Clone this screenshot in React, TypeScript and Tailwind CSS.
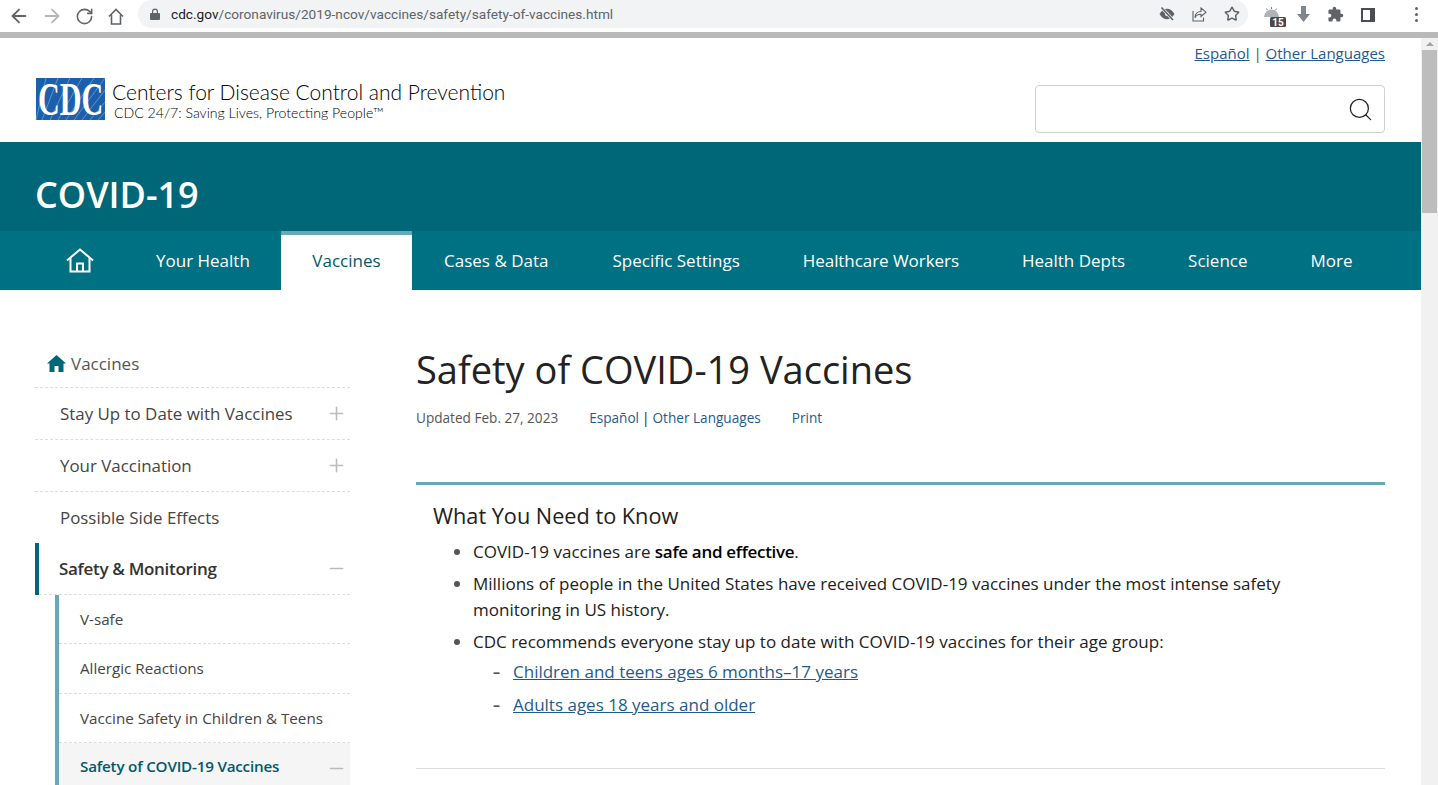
import { ArrowLeft, ArrowRight, RotateCw, Star, Search, Plus, Minus } from "lucide-react";

const navItems = [
  { label: "Cases & Data", cls: "px-[32px]" },
  { label: "Specific Settings", cls: "pl-[32px] pr-[31.5px]" },
  { label: "Healthcare Workers", cls: "px-[31.5px] tracking-[-0.06px]" },
  { label: "Health Depts", cls: "px-[31.5px]" },
  { label: "Science", cls: "px-[31.5px]" },
  { label: "More", cls: "px-[31.5px]" },
];

const subItems = ["V-safe", "Allergic Reactions", "Vaccine Safety in Children & Teens"];

function HomeOutline({ className }: { className?: string }) {
  return (
    <svg className={className} viewBox="0 0 28 25" fill="none" stroke="currentColor" strokeWidth="2">
      <path d="M1 12.5 14 1.5l13 11" />
      <path d="M4.5 10v13.5h19V10" />
      <path d="M11 23.5v-8h6v8" />
    </svg>
  );
}

function CdcLogo() {
  return (
    <svg className="w-[69px] h-[42px] shrink-0 overflow-visible" viewBox="0 0 69 42">
      <rect width="69" height="42" fill="#1c60ad" />
      <path
        d="M0 42 10 0M6 42 22 0M14 42 34 0M22 42 46 0M30 42 58 0M38 42 69 0M46 42 69 12M54 42 69 24M62 42 69 34"
        stroke="#8fb4dc"
        strokeWidth="0.6"
      />
      {/* squeezed to the narrow letters of the logo */}
      <text
        transform="translate(2 37) scale(0.64 1)"
        fontFamily="'Liberation Serif', serif"
        fontWeight="700"
        fontSize="47"
        fill="#fff"
      >
        CDC
      </text>
    </svg>
  );
}

function ChromeBar() {
  return (
    <div className="h-[32px] bg-white flex items-center text-[#5f6368]">
      <ArrowLeft className="w-[22px] h-[22px] ml-[8px]" />
      <ArrowRight className="w-[22px] h-[22px] ml-[11px] text-[#b4b6b9]" />
      <RotateCw className="w-[19px] h-[19px] ml-[11.5px]" />
      <svg className="w-[16px] h-[17px] ml-[14.5px]" viewBox="0 0 16 17" fill="none" stroke="#5f6368" strokeWidth="1.6">
        <path d="M1 8.5 8 1.500l7 7" />
        <path d="M3.500 7v9h9V7" />
      </svg>
      <div className="ml-[14px] w-[1110px] h-[28px] self-start bg-[#f1f3f4] rounded-full flex items-center">
        <svg className="w-[10px] h-[12px] ml-[12px]" viewBox="0 0 10 12" fill="#5f6368">
          <path d="M1 5h1V3.500a3 3 0 0 1 6 0V5h1a1 1 0 0 1 1 1v5a1 1 0 0 1-1 1H1a1 1 0 0 1-1-1V6a1 1 0 0 1 1-1zm2.200 0h3.600V3.500a1.800 1.800 0 0 0-3.600 0z" />
        </svg>
        <span className="ml-[11px] text-[13.65px] font-['Roboto',sans-serif] text-[#5f6368]">
          <span className="text-[#202124]">cdc.gov</span>/coronavirus/2019-ncov/vaccines/safety/safety-of-vaccines.html
        </span>
        <div className="ml-auto flex items-center gap-[17px] mr-[8px]">
          <svg className="w-[16px] h-[16px]" viewBox="0 0 16 16">
            <path d="M0.500 8c2-3.500 4.700-5.200 7.500-5.200s5.500 1.700 7.500 5.200c-2 3.500-4.700 5.200-7.500 5.200S2.500 11.500 0.500 8z" fill="#5f6368" />
            <circle cx="8" cy="8" r="2" fill="#f1f3f4" />
            <path d="M2.500 1.500 14 14" stroke="#f1f3f4" strokeWidth="3" />
            <path d="M2.500 1.500 14 14" stroke="#5f6368" strokeWidth="1.600" />
          </svg>
          <svg className="w-[15px] h-[15px]" viewBox="0 0 15 15" fill="none" stroke="#5f6368" strokeWidth="1.100">
            <path d="M1 4v10h10.500v-3.500" />
            <path d="M9 1l5 4.200-5 4.300V7.200c-3 0-5 1-6 3.500 0-4 2.500-6.200 6-6.200z" />
          </svg>
          <Star className="w-[16px] h-[16px]" strokeWidth={2.2} />
        </div>
      </div>
      <svg className="w-[22px] h-[27px] ml-[16px] self-start" viewBox="0 0 22 27">
        <path d="M0 17a7.500 7.500 0 0 1 15 0z" fill="#b0b4b8" />
        <path d="M7.500 7v2M2.500 8.500l1 1.500M12.500 8.500l-1 1.500" stroke="#80868b" strokeWidth="1" />
        <rect x="6" y="17" width="16" height="10" rx="1.500" fill="#4a4a4a" />
        <text x="14" y="25.500" textAnchor="middle" fontFamily="Roboto, sans-serif" fontWeight="700" fontSize="10" fill="#fff">
          15
        </text>
      </svg>
      <svg className="w-[13px] h-[16px] ml-[11px] -mt-[5px]" viewBox="0 0 13 16" fill="#80868b">
        <path d="M4 0h5v8h4l-6.500 8L0 8h4z" />
      </svg>
      <svg className="w-[17px] h-[17px] ml-[17px] -mt-[3px]" viewBox="0 0 24 24" fill="#5f6368">
        <path d="M20.500 11H19V7c0-1.100-.9-2-2-2h-4V3.500a2.500 2.500 0 0 0-5 0V5H4c-1.100 0-2 .9-2 2v3.800h1.500c1.500 0 2.700 1.200 2.700 2.700s-1.200 2.700-2.700 2.700H2V20c0 1.100.9 2 2 2h3.800v-1.500c0-1.500 1.200-2.700 2.700-2.700s2.700 1.200 2.700 2.700V22H17c1.100 0 2-.9 2-2v-4h1.500a2.500 2.500 0 0 0 0-5z" />
      </svg>
      <div className="w-[14px] h-[14px] ml-[17px] -mt-[3px] border-[2px] border-r-[5px] border-[#4a4e52]" />
      <div className="ml-[40px] -mt-[3px] flex flex-col gap-[3px]">
        <span className="w-[3px] h-[3px] rounded-full bg-[#5f6368]" />
        <span className="w-[3px] h-[3px] rounded-full bg-[#5f6368]" />
        <span className="w-[3px] h-[3px] rounded-full bg-[#5f6368]" />
      </div>
    </div>
  );
}

export default function App() {
  return (
    <div className="w-[1438px] h-[785px] overflow-hidden bg-white font-['Open_Sans',sans-serif] text-[#212121]">
      <ChromeBar />
      <div className="h-[6px] bg-[#b9b9b9]" />
      <div className="flex">
        <div className="w-[1421px] h-[747px] overflow-hidden">
          {/* site header */}
          <header className="h-[104px] px-[36px]">
            <div className="text-right pt-[4px] text-[15px] leading-[22px]">
              <a className="underline text-[#1f5a8c]">Español</a> <span className="text-[#1f5a8c]">|</span>{" "}
              <a className="underline text-[#1f5a8c]">Other Languages</a>
            </div>
            <div className="flex justify-between items-start">
              <div className="flex mt-[14px]">
                <CdcLogo />
                <div className="ml-[7px] pt-[1px] text-black font-['Lato',sans-serif] font-light">
                  <div className="text-[21px] leading-[26px] whitespace-nowrap">Centers for Disease Control and Prevention</div>
                  <div className="text-[14.1px] leading-[17px] ml-[2px] -mt-[1px]">CDC 24/7: Saving Lives, Protecting People™</div>
                </div>
              </div>
              <div className="w-[350px] h-[48px] mt-[21px] border border-[#ccd0d0] rounded-[4px] flex items-center justify-end pr-[10px]">
                <Search className="w-[27px] h-[27px] text-[#222]" strokeWidth={1.1} />
              </div>
            </div>
          </header>

          {/* covid band */}
          <div className="h-[89px] bg-[#006778] px-[35px] flex items-center pt-[16px]">
            <h1 className="text-[36px] font-semibold text-white leading-none">COVID-19</h1>
          </div>
          <nav className="h-[59px] bg-[#007083] pl-[35px] flex text-white text-[17px]">
            <a className="px-[31px] flex items-center">
              <HomeOutline className="w-[28px] h-[25px]" />
            </a>
            <a className="pl-[31px] pr-[31px] flex items-center">Your Health</a>
            <a className="px-[31.5px] flex items-center bg-white text-[#00596b] font-medium border-t-[4px] border-[#68a9b8] pb-[4px]">Vaccines</a>
            {navItems.map((item) => (
              <a key={item.label} className={`${item.cls} flex items-center`}>
                {item.label}
              </a>
            ))}
          </nav>

          {/* body */}
          <div className="flex pl-[35px] pt-[47px]">
            <aside className="w-[315px] shrink-0 text-[#444]">
              <div className="h-[51px] pl-[12px] pt-[3px] flex items-center gap-[5px] border-b border-dashed border-[#ddd] text-[17px] text-[#555]">
                <svg className="w-[19px] h-[17px] -mt-[1px]" viewBox="0 0 19 17" fill="#006778">
                  <path d="M9.500 0 19 8.500h-2.500V17H11.500V11H7.500V17H2.500V8.500H0Z" />
                </svg>
                Vaccines
              </div>
              <div className="h-[52px] pl-[25px] pr-[3px] flex items-center justify-between border-b border-dashed border-[#ddd] text-[16.9px]">
                Stay Up to Date with Vaccines
                <Plus className="w-[21px] h-[21px] text-[#bbb]" strokeWidth={1.8} />
              </div>
              <div className="h-[52px] pl-[25px] pr-[3px] flex items-center justify-between border-b border-dashed border-[#ddd] text-[16.9px]">
                Your Vaccination
                <Plus className="w-[21px] h-[21px] text-[#bbb]" strokeWidth={1.8} />
              </div>
              <div className="h-[51px] pl-[25px] flex items-center text-[16.9px]">Possible Side Effects</div>
              <div className="h-[52px] border-l-[4px] border-[#006778]">
                <div className="h-full pl-[20px] pr-[3px] flex items-center justify-between border-b border-dashed border-[#ddd] text-[17px] font-semibold tracking-[-0.3px] text-[#333]">
                  Safety &amp; Monitoring
                  <Minus className="w-[21px] h-[21px] text-[#bbb]" strokeWidth={1.8} />
                </div>
              </div>
              <div className="ml-[20px] border-l-[4px] border-[#68a9b8]">
                {subItems.map((item, i) => (
                  <div
                    key={item}
                    className={`${i === 1 ? "h-[50px]" : "h-[49px]"} pl-[21px] flex items-center border-b border-dashed border-[#ddd] text-[15.2px]`}
                  >
                    {item}
                  </div>
                ))}
                <div className="h-[49px] pl-[21px] pr-[3px] pb-[2px] flex items-center justify-between bg-[#f5f5f5] text-[15.2px] font-semibold tracking-[-0.2px] text-[#00596b]">
                  Safety of COVID-19 Vaccines
                  <Minus className="w-[21px] h-[21px] text-[#bbb] mt-[4px]" strokeWidth={1.8} />
                </div>
              </div>
            </aside>

            <main className="ml-[66px] w-[969px]">
              <h2 className="text-[38px] leading-[48px] text-[#222] mt-[8px]">Safety of COVID-19 Vaccines</h2>
              <div className="flex text-[13.6px] mt-[15px] leading-[20px]">
                <span className="text-[#555]">Updated Feb. 27, 2023</span>
                <span className="ml-[31px] text-[#1f5a8c]">Español</span>
                <span className="mx-[3px]">|</span>
                <span className="text-[#1f5a8c]">Other Languages</span>
                <span className="ml-[31px] text-[#1f5a8c]">Print</span>
              </div>
              <section className="mt-[54px] border-t-[3px] border-[#68a9b8] pl-[17px] pt-[17px] pb-[50px]">
                <h3 className="text-[21.7px] leading-[28px]">What You Need to Know</h3>
                <ul className="list-disc pl-[40px] pr-[80px] mt-[9px] text-[17px] leading-[26px] marker:text-[#555]">
                  <li>
                    COVID-19 vaccines are <strong className="font-semibold tracking-[-0.3px] text-black">safe and effective</strong>.
                  </li>
                  <li className="mt-[6px]">
                    Millions of people in the United States have received COVID-19 vaccines under the most intense safety monitoring in US history.
                  </li>
                  <li className="mt-[6px]">
                    CDC recommends everyone stay up to date with COVID-19 vaccines for their age group:
                    <div className="mt-[4px] flex flex-col gap-[7px]">
                      <div className="flex pl-[20px]">
                        <span className="w-[20px] font-bold text-[#555] text-[14px]">–</span>
                        <a className="underline text-[#1f5a8c]">Children and teens ages 6 months–17 years</a>
                      </div>
                      <div className="flex pl-[20px]">
                        <span className="w-[20px] font-bold text-[#555] text-[14px]">–</span>
                        <a className="underline text-[#1f5a8c]">Adults ages 18 years and older</a>
                      </div>
                    </div>
                  </li>
                </ul>
              </section>
              <div className="border-t border-[#ddd]" />
            </main>
          </div>
        </div>

        {/* scrollbar */}
        <div className="w-[17px] h-[747px] bg-[#f1f1f1] flex flex-col items-center">
          <div className="mt-[4px] w-0 h-0 border-l-[4px] border-r-[4px] border-b-[4px] border-l-transparent border-r-transparent border-b-[#a3a3a3]" />
          <div className="mt-[4px] w-[15px] h-[163px] bg-[#bdbdbd]" />
        </div>
      </div>
    </div>
  );
}
